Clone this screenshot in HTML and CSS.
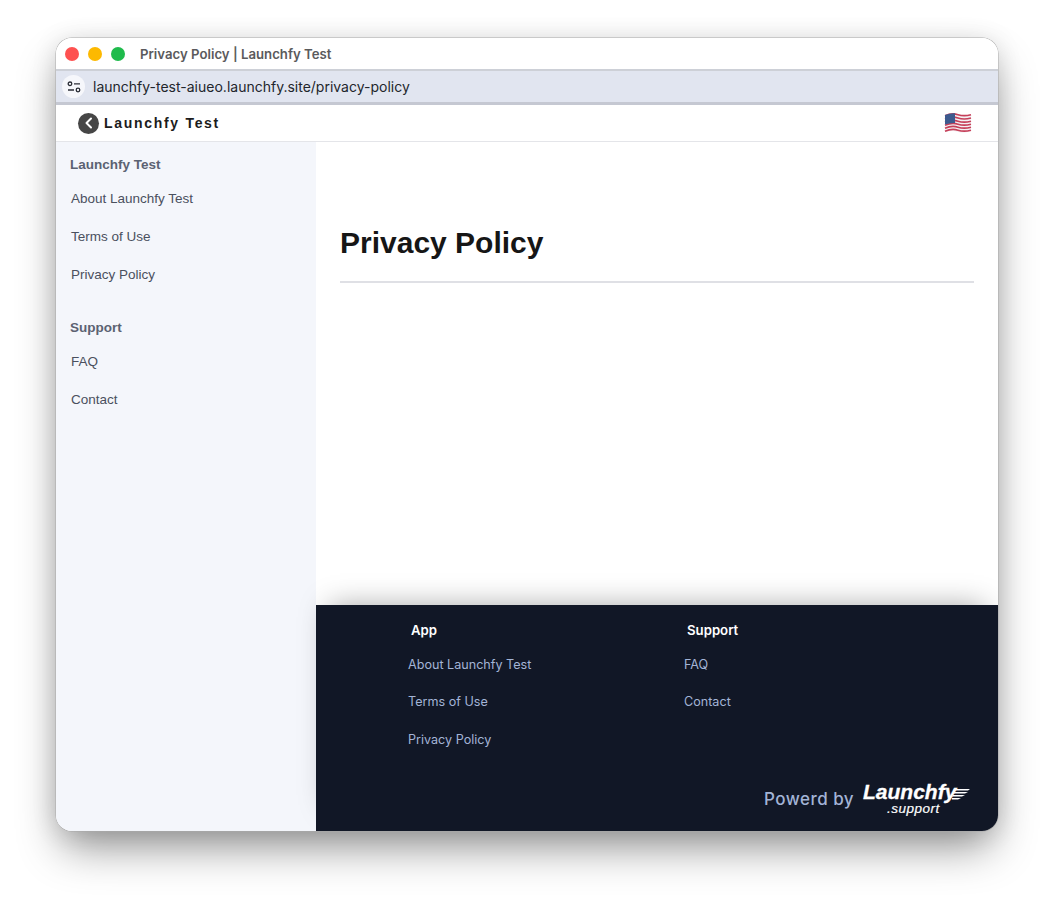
FILE: index.html
```html
<!DOCTYPE html>
<html lang="en">
<head>
	<meta charset="UTF-8">
	<title>Privacy Policy | Launchfy Test</title>
	<link rel="stylesheet" href="styles.css">
</head>
<body>
	<div class="window">
		<!-- title bar -->
		<div class="titlebar">
			<span class="light red"></span>
			<span class="light yellow"></span>
			<span class="light green"></span>
			<span class="title">Privacy Policy | Launchfy Test</span>
		</div>

		<!-- address bar -->
		<div class="urlbar">
			<span class="tune">
				<svg width="14" height="12" viewBox="0 0 14 12" fill="none" stroke="#2a2d36" stroke-width="1.3">
					<circle cx="3" cy="2.8" r="1.8"/>
					<path d="M7 2.8h6"/>
					<path d="M1 9h6"/>
					<circle cx="11" cy="9" r="1.8"/>
				</svg>
			</span>
			<span class="url">launchfy-test-aiueo.launchfy.site/privacy-policy</span>
		</div>

		<!-- header -->
		<div class="header">
			<div class="brand">
				<span class="back">
					<svg width="10" height="12" viewBox="0 0 10 12" fill="none" stroke="#fff" stroke-width="2" stroke-linecap="round" stroke-linejoin="round">
						<path d="M7 1.5 2.5 6 7 10.5"/>
					</svg>
				</span>
				<span class="brand-name">Launchfy Test</span>
			</div>
			<svg class="flag" width="28" height="22" viewBox="0 0 28 22">
				<path d="M1 3Q8 0 14 2T27 2V19Q20 22 14 20T1 20Z" fill="#f4f1f3"/>
				<g fill="none" stroke="#c6405a" stroke-width="1.7">
					<path d="M1 3.7Q8 .7 14 2.7T27 2.7"/>
					<path d="M1 7Q8 4 14 6T27 6"/>
					<path d="M1 10.2Q8 7.2 14 9.2T27 9.2"/>
					<path d="M1 13.2Q8 10.2 14 12.2T27 12.2"/>
					<path d="M1 16.2Q8 13.2 14 15.2T27 15.2"/>
					<path d="M1 19.2Q8 16.2 14 18.2T27 18.2"/>
				</g>
				<path d="M1 3Q6 .9 11 1.2V11.1Q6 10.8 1 12.6Z" fill="#3d5a8e"/>
			</svg>
		</div>

		<div class="page">
			<!-- sidebar -->
			<div class="sidebar">
				<h3>Launchfy Test</h3>
				<a href="#">About Launchfy Test</a>
				<a href="#">Terms of Use</a>
				<a href="#">Privacy Policy</a>
				<h3 class="second">Support</h3>
				<a href="#">FAQ</a>
				<a href="#">Contact</a>
			</div>

			<div class="main">
				<div class="content">
					<h1>Privacy Policy</h1>
				</div>

				<!-- footer -->
				<div class="footer">
					<div class="footer-cols">
						<div class="footer-col">
							<h4>App</h4>
							<a href="#">About Launchfy Test</a>
							<a href="#">Terms of Use</a>
							<a href="#">Privacy Policy</a>
						</div>
						<div class="footer-col">
							<h4>Support</h4>
							<a href="#">FAQ</a>
							<a href="#">Contact</a>
						</div>
					</div>
					<div class="powered">
						<span class="powered-by">Powerd by</span>
						<span class="logo">
							<span class="logo-name">Launchfy</span>
							<span class="logo-sub">.support</span>
							<svg class="logo-lines" width="18" height="13" viewBox="0 0 18 13" fill="#fff">
								<path d="M2 0H18L16 1.6H1Z"/>
								<path d="M2 3H16L13 4.6H1Z"/>
								<path d="M1 6H13L10 7.6H0Z"/>
								<path d="M0 9H9L6 10.6H0Z"/>
							</svg>
						</span>
					</div>
				</div>
			</div>
		</div>
	</div>
</body>
</html>
```

FILE: styles.css
```css
* {
	box-sizing: border-box;
}

html,
body {
	margin: 0;
	padding: 0;
	background: #fff;
	overflow: hidden;
}

body {
	height: 905px;
	padding: 38px 56px 74px;
	font-family: "Liberation Sans", Arial, sans-serif;
}

h1,
h3,
h4 {
	margin: 0;
}

a {
	text-decoration: none;
}

/* window */
.window {
	display: flex;
	flex-direction: column;
	height: 793px;
	background: #fff;
	border-radius: 16px;
	overflow: hidden;
	box-shadow: 0 0 0 0.5px #a9a9a9, 0 22px 44px -6px rgba(0, 0, 0, 0.42), 0 2px 26px rgba(0, 0, 0, 0.12);
}

.titlebar {
	display: flex;
	align-items: center;
	height: 31px;
	flex: none;
	padding: 1px 0 0 9px;
	background: #fff;
}

.light {
	width: 14px;
	height: 14px;
	margin-right: 9px;
	border-radius: 50%;
}

.red {
	background: #fe5150;
}

.yellow {
	background: #fdb900;
}

.green {
	background: #1fbb4c;
}

.title {
	margin-left: 6px;
	font-family: Inter, sans-serif;
	font-size: 13.2px;
	font-weight: 600;
	color: #5a5a5c;
}

.urlbar {
	display: flex;
	align-items: center;
	flex: none;
	height: 36px;
	padding-left: 6px;
	background: #e1e5f0;
	border-top: 2px solid #cdd0d7;
	border-bottom: 3px solid #c5c8d2;
}

.tune {
	display: flex;
	align-items: center;
	justify-content: center;
	width: 23px;
	height: 23px;
	border-radius: 50%;
	background: #f6f7fb;
}

.url {
	margin-left: 8px;
	font-family: Inter, sans-serif;
	font-size: 14px;
	color: #22252c;
}

.header {
	display: flex;
	align-items: center;
	justify-content: space-between;
	flex: none;
	height: 37px;
	padding: 0 26px 0 22px;
	background: #fff;
	border-bottom: 1px solid #e4e5e9;
}

.brand {
	display: flex;
	align-items: center;
	gap: 5px;
}

.back {
	display: flex;
	align-items: center;
	justify-content: center;
	width: 21px;
	height: 21px;
	border-radius: 50%;
	background: #464646;
}

.brand-name {
	font-size: 14px;
	font-weight: 700;
	letter-spacing: 1.7px;
	color: #1c1c1c;
}

.page {
	display: flex;
	flex: 1;
	min-height: 0;
}

/* sidebar */
.sidebar {
	flex: none;
	display: flex;
	flex-direction: column;
	width: 260px;
	padding: 15px 14px 0;
	background: #f4f6fb;
}

.sidebar h3 {
	font-size: 13.5px;
	line-height: 16px;
	font-weight: 700;
	color: #5b6272;
	margin-bottom: 18px;
}

.sidebar h3.second {
	margin-top: 15px;
}

.sidebar a {
	height: 38px;
	padding: 0 1px;
	line-height: 16px;
	font-size: 13.5px;
	color: #4a505e;
}

.main {
	flex: 1;
	min-width: 0;
	display: flex;
	flex-direction: column;
}

.content {
	flex: 1;
	padding: 83px 24px 0;
}

.content h1 {
	padding-bottom: 20px;
	border-bottom: 2px solid #dfe0e5;
	font-size: 30px;
	line-height: 36px;
	font-weight: 700;
	color: #161616;
}

/* footer */
.footer {
	position: relative;
	flex: none;
	height: 226px;
	background: #111726;
	box-shadow: 0 -12px 28px -14px rgba(0, 0, 0, 0.38);
}

.footer-cols {
	display: flex;
	padding: 17px 0 0 92px;
}

.footer-col {
	display: flex;
	flex-direction: column;
	width: 276px;
}

.footer-col h4 {
	margin: 0 0 19px 3px;
	font-family: Inter, sans-serif;
	font-size: 13.2px;
	line-height: 16px;
	font-weight: 600;
	color: #fff;
}

.footer-col a {
	height: 37.4px;
	font-family: Inter, sans-serif;
	font-size: 12.6px;
	line-height: 16px;
	color: #a3b4d6;
}

.powered {
	position: absolute;
	right: 27px;
	bottom: 16px;
	display: flex;
	align-items: center;
	gap: 9px;
}

.powered-by {
	font-family: Inter, sans-serif;
	font-size: 17px;
	font-weight: 500;
	letter-spacing: 0.45px;
	color: #a3b4d6;
}

.logo {
	position: relative;
	display: block;
	width: 108px;
	height: 32px;
	color: #fff;
	font-style: italic;
	font-weight: 700;
}

.logo-name {
	position: absolute;
	left: 0;
	top: -1px;
	font-size: 21px;
	line-height: 20px;
	-webkit-text-stroke: 0.3px #fff;
}

.logo-sub {
	position: absolute;
	left: 24px;
	top: 20px;
	font-size: 13.5px;
	line-height: 11px;
	font-weight: 400;
	letter-spacing: 0.5px;
	-webkit-text-stroke: 0.2px #fff;
}

.logo-lines {
	position: absolute;
	right: 1px;
	top: 6px;
}
```
